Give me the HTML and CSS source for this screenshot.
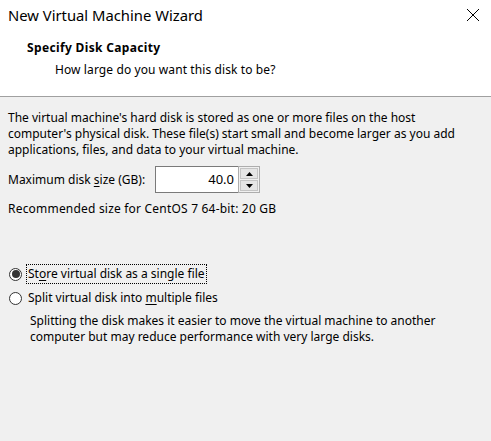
FILE: index.html
```html
<!DOCTYPE html>
<html>
<head>
<meta charset="utf-8">
<link rel="stylesheet" href="styles.css">
</head>
<body>
<div class="window">
  <div class="top">
    <div class="titlebar">
      <span class="title">New Virtual Machine Wizard</span>
      <svg class="close" width="14" height="14" viewBox="0 0 14 14"><path d="M1 1 L13 13 M13 1 L1 13" stroke="#000" stroke-width="1" fill="none"/></svg>
    </div>
    <div class="heading">Specify Disk Capacity</div>
    <div class="subheading">How large do you want this disk to be?</div>
  </div>
  <div class="content">
    <p class="intro">The virtual machine's hard disk is stored as one or more files on the host<br>computer's physical disk. These file(s) start small and become larger as you add<br>applications, files, and data to your virtual machine.</p>
    <div class="size-row">
      <span class="label">Maximum disk <u>s</u>ize (GB):</span>
      <div class="spin">
        <div class="spin-input">40.0</div>
        <div class="spin-buttons">
          <div class="spin-btn"><svg width="7" height="4" viewBox="0 0 7 4"><path d="M3.5 0 L7 4 L0 4 Z" fill="#000"/></svg></div>
          <div class="spin-btn"><svg width="7" height="4" viewBox="0 0 7 4"><path d="M0 0 L7 0 L3.5 4 Z" fill="#000"/></svg></div>
        </div>
      </div>
    </div>
    <div class="recommended">Recommended size for CentOS 7 64-bit: 20 GB</div>
    <div class="options">
      <div class="option">
        <span class="radio checked"><span class="dot"></span></span>
        <span class="opt-label focused">St<u>o</u>re virtual disk as a single file</span>
      </div>
      <div class="option">
        <span class="radio"></span>
        <span class="opt-label">Split virtual disk into <u>m</u>ultiple files</span>
      </div>
      <p class="note">Splitting the disk makes it easier to move the virtual machine to another<br>computer but may reduce performance with very large disks.</p>
    </div>
  </div>
</div>
</body>
</html>
```

FILE: styles.css
```css
html, body {
  margin: 0;
  padding: 0;
  background: #f0f0f0;
  font-family: "Noto Sans", "DejaVu Sans", sans-serif;
  font-size: 12px;
  color: #000;
}
.window {
  width: 491px;
  height: 441px;
  display: flex;
  flex-direction: column;
}
.top {
  background: #fff;
  height: 96px;
  border-bottom: 1px solid #a0a0a0;
  box-sizing: content-box;
}
.titlebar {
  height: 29px;
  display: flex;
  align-items: center;
  justify-content: space-between;
  padding: 0 10px 0 8px;
}
.title {
  font-size: 14.8px;
  color: #000;
}
.close {
  display: block;
  margin-right: 1px;
}
.heading {
  font-weight: bold;
  letter-spacing: 0.35px;
  margin: 11px 0 0 27px;
  line-height: 16px;
}
.subheading {
  margin: 6px 0 0 55px;
  line-height: 16px;
  letter-spacing: 0.1px;
}
.content {
  padding: 13px 8px 0 8px;
}
.intro {
  margin: 0;
  line-height: 16px;
  white-space: nowrap;
}
.size-row {
  display: flex;
  align-items: center;
  margin-top: 8px;
}
.label {
  width: 147px;
}
.spin {
  display: flex;
  height: 27px;
}
.spin-input {
  width: 78px;
  height: 25px;
  border: 1px solid #7a7a7a;
  border-right: none;
  background: #fff;
  text-align: right;
  line-height: 25px;
  padding-right: 4px;
  font-size: 13px;
}
.spin-buttons {
  width: 18px;
  border: 1px solid #adadad;
  padding: 1px;
  display: flex;
  flex-direction: column;
  gap: 1px;
  background: #f0f0f0;
}
.spin-btn {
  flex: 1;
  background: #e5e5e5;
  border: 1px solid #c4c4c4;
  display: flex;
  align-items: center;
  justify-content: center;
}
.spin-btn svg { display: block; }
.recommended {
  margin-top: 8px;
  line-height: 16px;
  letter-spacing: 0.2px;
}
.options {
  margin-top: 45px;
  padding-left: 1px;
}
.option {
  display: flex;
  align-items: center;
  height: 24px;
}
.radio {
  width: 11px;
  height: 11px;
  border: 1px solid #333;
  border-radius: 50%;
  background: #fff;
  display: flex;
  align-items: center;
  justify-content: center;
  margin-right: 5px;
}
.radio .dot {
  width: 8px;
  height: 8px;
  border-radius: 50%;
  background: #333;
}
.opt-label {
  line-height: 16px;
  padding: 1px 1px;
}
.opt-label.focused {
  outline: 1px dotted #000;
  outline-offset: 0;
}
.note {
  margin: 3px 0 0 21px;
  line-height: 16px;
  white-space: nowrap;
}
u { text-decoration-thickness: 1px; text-underline-offset: 2px; }
```
